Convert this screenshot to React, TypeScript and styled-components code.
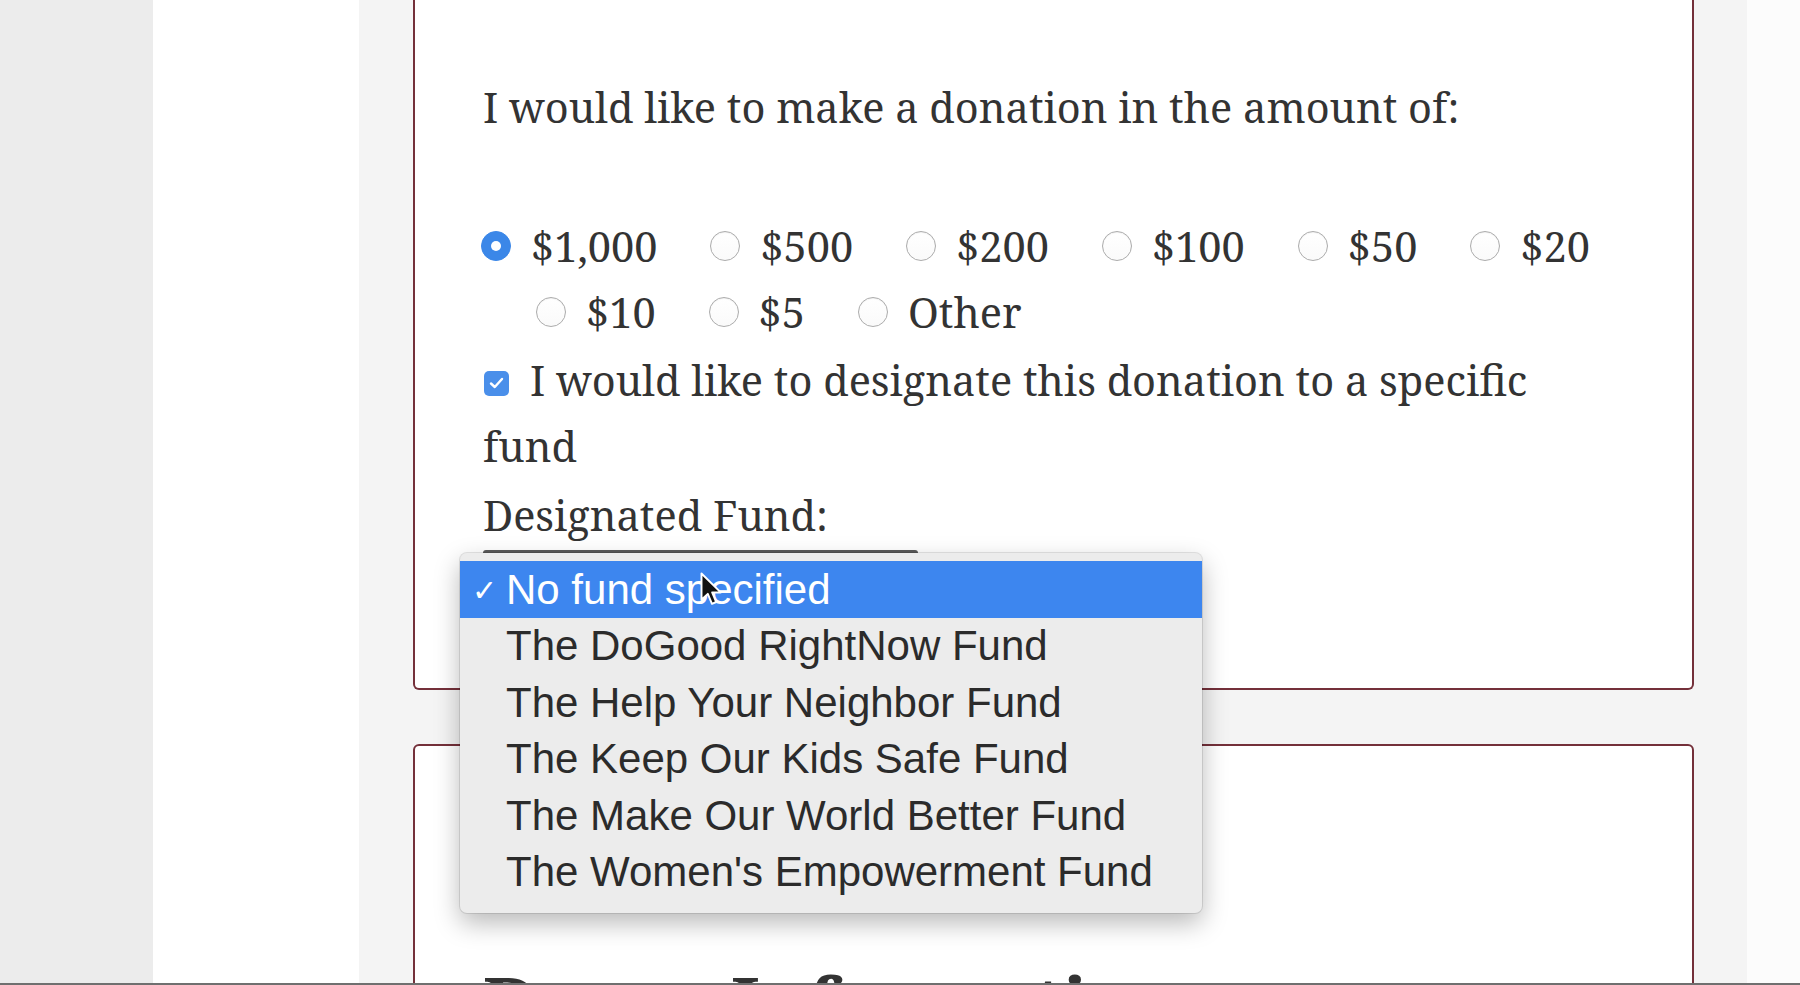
import React from 'react';
import styled, { createGlobalStyle } from 'styled-components';

const GlobalStyle = createGlobalStyle`
    html, body {
        margin: 0;
        padding: 0;
        overflow: hidden;
        background: #ffffff;
    }
    * {
        box-sizing: border-box;
    }
`;

const Page = styled.div`
    width: 1800px;
    height: 985px;
    display: flex;
    flex-direction: column;
    font-family: 'Noto Serif', 'DejaVu Serif', serif;
    color: #333333;
`;

const Main = styled.div`
    flex: 1;
    min-height: 0;
    display: flex;
    overflow: hidden;
`;

const LeftRail = styled.div`
    width: 153px;
    background: #ececec;
`;

const Gutter = styled.div`
    width: 206px;
    background: #ffffff;
`;

const Column = styled.div`
    width: 1388px;
    background: #f4f4f4;
    padding: 0 53px 0 54px;
    display: flex;
    flex-direction: column;
    gap: 54px;
    overflow: hidden;
`;

const RightStrip = styled.div`
    flex: 1;
    background: #fcfcfc;
`;

const BottomLine = styled.div`
    height: 2px;
    background: #6f6f6f;
`;

const Card = styled.section<{ $cutTop?: boolean; $padTop: number }>`
    flex-shrink: 0;
    background: #ffffff;
    border: 2px solid #74303a;
    border-top: ${p => (p.$cutTop ? 'none' : '2px solid #74303a')};
    border-radius: ${p => (p.$cutTop ? '0 0 6px 6px' : '6px')};
    padding: ${p => p.$padTop}px 66px 0 68px;
`;

const Line = styled.div<{ $mt?: number }>`
    font-size: 41.5px;
    line-height: 66px;
    margin-top: ${p => p.$mt || 0}px;
    white-space: nowrap;
`;

const RadioRow = styled.div<{ $indent?: number; $mt?: number }>`
    display: flex;
    align-items: center;
    height: 66px;
    padding-left: ${p => p.$indent || 0}px;
    margin-left: -2px;
    margin-top: ${p => p.$mt || 0}px;
`;

const RadioItem = styled.label`
    display: flex;
    align-items: center;
    gap: 20px;
    margin-right: 53px;
    font-size: 41.5px;
`;

const RadioDot = styled.span<{ $on?: boolean }>`
    width: 30px;
    height: 30px;
    border-radius: 50%;
    flex-shrink: 0;
    display: flex;
    align-items: center;
    justify-content: center;
    background: ${p => (p.$on ? '#3b87e8' : 'linear-gradient(#ffffff, #fafafa)')};
    border: 1.5px solid ${p => (p.$on ? '#3b87e8' : '#acacac')};
    box-shadow: ${p => (p.$on ? 'none' : 'inset 0 1px 1px rgba(0, 0, 0, 0.06)')};

    &::after {
        content: '';
        display: ${p => (p.$on ? 'block' : 'none')};
        width: 10px;
        height: 10px;
        border-radius: 50%;
        background: #ffffff;
    }
`;

const CheckLine = styled.div`
    font-size: 41.5px;
    line-height: 66px;
    margin-top: 2px;
`;

const CheckBox = styled.span`
    display: inline-flex;
    align-items: center;
    justify-content: center;
    width: 25px;
    height: 25px;
    border-radius: 5px;
    background: #4a8fea;
    margin: 0 21px 0 1px;
    vertical-align: 7px;
`;

const FundField = styled.div`
    position: relative;
    width: 435px;
    height: 62px;
    margin-top: 2px;
    margin-bottom: 76px;
`;

const SelectBox = styled.div`
    height: 100%;
    border-top: 4px solid #5a5a5a;
    border-radius: 3px;
    background: #f3f3f3;
`;

const Popup = styled.div`
    position: absolute;
    z-index: 20;
    left: -23px;
    top: 3px;
    width: 742px;
    height: 360px;
    padding: 8px 0 12px;
    background: #ececec;
    border-radius: 7px;
    box-shadow: 0 0 0 1px rgba(0, 0, 0, 0.1), 0 10px 26px rgba(0, 0, 0, 0.28);
    font-family: 'Liberation Sans', Arial, sans-serif;
    font-size: 42px;
    color: #2b2b2b;
`;

const Option = styled.div<{ $active?: boolean; $h: number }>`
    position: relative;
    height: ${p => p.$h}px;
    line-height: ${p => p.$h}px;
    padding-left: 46px;
    white-space: nowrap;
    background: ${p => (p.$active ? '#3d86ef' : 'transparent')};
    color: ${p => (p.$active ? '#ffffff' : '#2b2b2b')};
`;

const Tick = styled.span`
    position: absolute;
    left: 12px;
    top: 1px;
    font-family: 'DejaVu Sans', sans-serif;
    font-size: 30px;
    font-weight: 700;
`;

const Cursor = styled.svg`
    position: absolute;
    z-index: 30;
    left: 240px;
    top: 19px;
`;

const Heading = styled.h2`
    margin: 0;
    font-size: 72px;
    line-height: 86px;
    font-weight: 700;
    color: #333333;
    white-space: nowrap;
`;

const amountsTop = ['$1,000', '$500', '$200', '$100', '$50', '$20'];
const amountsBottom = ['$10', '$5', 'Other'];
const funds = [
    'The DoGood RightNow Fund',
    'The Help Your Neighbor Fund',
    'The Keep Our Kids Safe Fund',
    'The Make Our World Better Fund',
    "The Women's Empowerment Fund",
];

const Radio = ({ label, on }: { label: string; on?: boolean }) => (
    <RadioItem>
        <RadioDot $on={on} />
        <span>{label}</span>
    </RadioItem>
);

export default function App() {
    return (
        <>
            <GlobalStyle />
            <Page>
                <Main>
                    <LeftRail />
                    <Gutter />
                    <Column>
                        <Card $cutTop $padTop={74}>
                            <Line>I would like to make a donation in the amount of:</Line>
                            <RadioRow $mt={73}>
                                {amountsTop.map((a, i) => (
                                    <Radio key={a} label={a} on={i === 0} />
                                ))}
                            </RadioRow>
                            <RadioRow $indent={55}>
                                {amountsBottom.map(a => (
                                    <Radio key={a} label={a} />
                                ))}
                            </RadioRow>
                            <CheckLine>
                                <CheckBox>
                                    <svg width="15" height="12" viewBox="0 0 15 12">
                                        <path d="M2 6.5 L5.8 10 L13 2" fill="none" stroke="#fff" strokeWidth="2.4" strokeLinecap="round" strokeLinejoin="round" />
                                    </svg>
                                </CheckBox>
                                I would like to designate this donation to a specific
                                <br />
                                fund
                            </CheckLine>
                            <Line $mt={3}>Designated Fund:</Line>
                            <FundField>
                                <SelectBox />
                                <Popup>
                                    <Option $active $h={57}>
                                        <Tick>✓</Tick>
                                        No fund specified
                                    </Option>
                                    {funds.map(f => (
                                        <Option key={f} $h={56.6}>
                                            {f}
                                        </Option>
                                    ))}
                                    <Cursor width="24" height="36" viewBox="0 0 16 24">
                                        <path d="M1 1 L1 18.5 L5.2 14.6 L8 21.2 L10.8 20 L8.1 13.6 L13.8 13.6 Z" fill="#111" stroke="#fff" strokeWidth="1.3" strokeLinejoin="round" />
                                    </Cursor>
                                </Popup>
                            </FundField>
                        </Card>
                        <Card $padTop={213}>
                            <Heading>Donor Information</Heading>
                        </Card>
                    </Column>
                    <RightStrip />
                </Main>
                <BottomLine />
            </Page>
        </>
    );
}
